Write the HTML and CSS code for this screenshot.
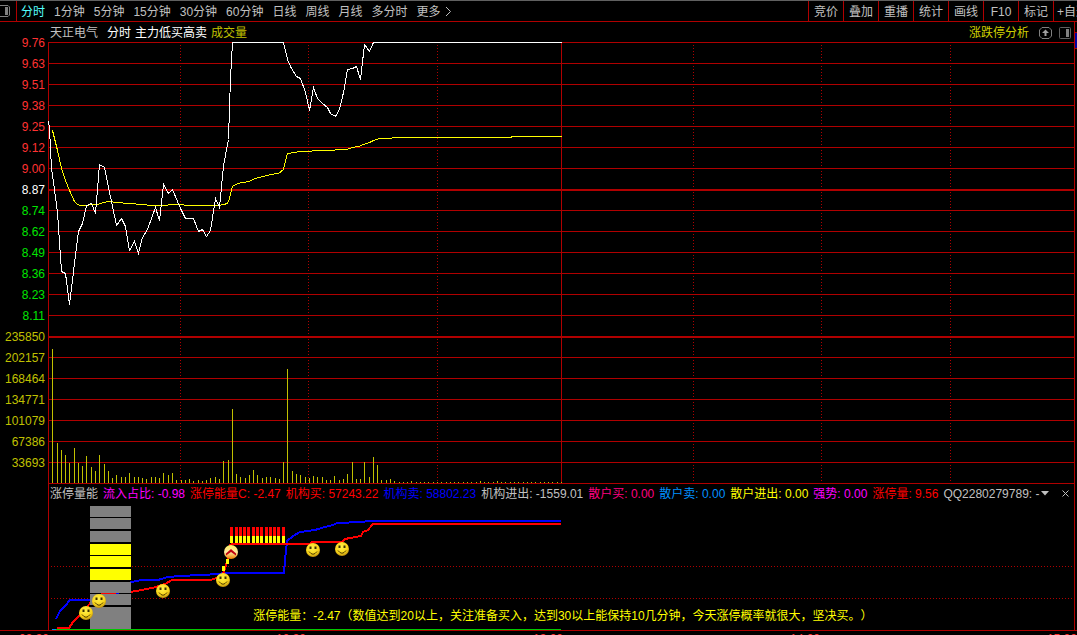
FILE: index.html
```html
<!DOCTYPE html>
<html lang="zh-CN">
<head>
  <meta charset="UTF-8">
  <title>天正电气 分时</title>
  <meta name="viewport" content="width=device-width, initial-scale=1.0">
  <link rel="stylesheet" href="styles.css">
</head>
<body>
  <!-- Toolbar -->
  <header class="toolbar">
    <button class="icon-btn panel-btn" type="button" aria-label="侧栏">
      <svg width="11" height="12" viewBox="0 0 11 12"><path d="M0 .5H8L9.500 2V10L8 11.500H0" fill="none" stroke="#808080"/><path d="M5 2H8V10H5Z" fill="#808080"/></svg>
    </button>
    <nav class="periods">
      <button class="active" type="button">分时</button>
      <button type="button">1分钟</button>
      <button type="button">5分钟</button>
      <button type="button">15分钟</button>
      <button type="button">30分钟</button>
      <button type="button">60分钟</button>
      <button type="button">日线</button>
      <button type="button">周线</button>
      <button type="button">月线</button>
      <button type="button">多分时</button>
      <button type="button">更多<svg class="chevron" width="8" height="10" viewBox="0 0 8 10"><path d="M2 0L6.500 4.500L2 9" fill="none" stroke="#c0c0c0"/></svg></button>
    </nav>
    <div class="tools">
      <button type="button">竞价</button>
      <button type="button">叠加</button>
      <button type="button">重播</button>
      <button type="button">统计</button>
      <button type="button">画线</button>
      <button type="button">F10</button>
      <button type="button">标记</button>
      <button class="clipped" type="button">+自选</button>
    </div>
  </header>

  <main class="workspace">
    <!-- Price and volume scale -->
    <ul class="axis">
      <li class="up">9.76</li>
      <li class="up">9.63</li>
      <li class="up">9.51</li>
      <li class="up">9.38</li>
      <li class="up">9.25</li>
      <li class="up">9.12</li>
      <li class="up">9.00</li>
      <li class="flat">8.87</li>
      <li class="down">8.74</li>
      <li class="down">8.62</li>
      <li class="down">8.49</li>
      <li class="down">8.36</li>
      <li class="down">8.23</li>
      <li class="down">8.11</li>
      <li class="vol">235850</li>
      <li class="vol">202157</li>
      <li class="vol">168464</li>
      <li class="vol">134771</li>
      <li class="vol">101079</li>
      <li class="vol">67386</li>
      <li class="vol">33693</li>
    </ul>

    <div class="charts">
      <div class="chart-head">
        <span class="name">天正电气</span>
        <span class="white">分时</span>
        <span class="white">主力低买高卖</span>
        <span class="gold">成交量</span>
        <a class="analysis" href="#">涨跌停分析</a>
        <button class="icon-btn move-btn" type="button" aria-label="上移">
          <svg width="13" height="12" viewBox="0 0 13 12"><path d="M3 .5H10L12.500 3V9L10 11.500H3L.500 9V3Z" fill="none" stroke="#808080"/><path d="M6.500 2.500L10 6H7.500V9H5.500V6H3Z" fill="#a0a0a0"/></svg>
        </button>
        <button class="icon-btn" type="button" aria-label="侧栏">
          <svg width="12" height="12" viewBox="0 0 12 12"><rect x=".5" y=".5" width="11" height="11" rx="1" fill="none" stroke="#606060"/><path d="M7 2H10V10H7Z" fill="#808080"/></svg>
        </button>
      </div>

      <svg class="price-chart" viewBox="0 0 1026 441" preserveAspectRatio="none">
        <g id="grid"></g>
        <g id="volume"></g>
        <g transform="translate(.5 .5)">
          <polyline class="line avg" points="4,88 9,108 13,126 17,138 21,148 26,159 29,162 32,163 49,162 55,160 60,159 79,161 95,162 102,163 115,163 125,162 145,163 169,163 176,162 180,160 184,144 189,141 200,139 207,136 222,132 230,131 235,127 237,118 239,111 252,109 298,107 304,105 310,104 315,102 321,100 325,98 331,96 357,95 382,95 462,95 464,94 513,94"/>
          <polyline class="line price" points="0,79 1,86 3,126 5,140 9,170 13,229 17,231 21,262 26,221 30,189 34,181 38,163 43,161 47,171 51,122 56,125 60,145 68,183 73,176 77,184 81,208 86,199 90,211 94,195 99,187 107,165 111,178 115,142 120,151 124,147 132,166 137,176 145,176 150,189 154,187 158,194 162,188 167,156 171,165 175,123 180,97 181,65 182,36 184,0 235,0 239,17 243,26 248,34 252,36 257,50 261,68 265,45 269,56 274,61 279,65 282,71 287,74 291,67 295,50 299,27 304,26 308,24 312,37 316,2 321,9 325,0 513,0"/>
        </g>
      </svg>

      <!-- Indicator -->
      <section class="indicator">
        <div class="indicator-head">
          <span class="name">涨停量能</span>
          <span class="magenta">流入占比: -0.98</span>
          <span class="red">涨停能量C: -2.47</span>
          <span class="red">机构买: 57243.22</span>
          <span class="blue">机构卖: 58802.23</span>
          <span class="name">机构进出: -1559.01</span>
          <span class="pink">散户买: 0.00</span>
          <span class="sky">散户卖: 0.00</span>
          <span class="yellow">散户进出: 0.00</span>
          <span class="magenta">强势: 0.00</span>
          <span class="red">涨停量: 9.56</span>
          <span class="name">QQ2280279789: -</span>
          <button class="icon-btn menu-btn" type="button" aria-label="菜单">
            <svg width="8" height="5" viewBox="0 0 8 5"><path d="M0 0H8L4 4.500Z" fill="#c0c0c0"/></svg>
          </button>
          <button class="icon-btn close-btn" type="button" aria-label="关闭">
            <svg width="7" height="7" viewBox="0 0 7 7"><path d="M.5 .5L6.500 6.500M6.500 .5L.5 6.500" stroke="#c0c0c0" fill="none"/></svg>
          </button>
        </div>

        <svg class="flow-chart" viewBox="0 0 1026 128" preserveAspectRatio="none">
          <defs>
            <radialGradient id="gold" cx="45%" cy="35%" r="65%">
              <stop offset="0" stop-color="#fff04a"/>
              <stop offset=".7" stop-color="#f8d418"/>
              <stop offset="1" stop-color="#b88a10"/>
            </radialGradient>
            <linearGradient id="orange" x1="0" y1="0" x2="0" y2="1">
              <stop offset="0" stop-color="#fff060"/>
              <stop offset=".5" stop-color="#ffe8a0"/>
              <stop offset="1" stop-color="#f08000"/>
            </linearGradient>
            <g id="smile">
              <circle r="7" fill="url(#gold)"/>
              <path d="M-3.500 -3.500H-1.500V-1H-3.500ZM1.500 -3.500H3.500V-1H1.500Z" fill="#3a3000"/>
              <path d="M-4 1.500Q0 7 4 1.500" fill="none" stroke="#4a3800"/>
            </g>
          </defs>
          <path class="dots" d="M3 64.500H1024M3 96.500H1024"/>
          <polyline class="flow sell" points="8,117 12,109 17,104 22,98 50,98 55,91 70,91 83,80 94,78 110,78 120,75 132,74 152,73 172,72 175,71 236,71 237,58 239,39 245,34 252,30 267,28 277,25 285,23 289,21 313,20 322,19 513,19"/>
          <polyline class="flow buy" points="9,126 21,126 25,120 32,113 38,106 44,99 55,91 82,90 94,88 108,85 117,82 124,78 162,78 169,76 175,72 178,63 181,53 182,43 184,42 262,42 264,40 294,40 297,37 302,36 313,34 315,30 320,28 324,23 325,22 513,22"/>
          <g id="blocks"></g>
          <g id="ticks"></g>
          <path d="M178 57H181V62H178ZM174 64H177V69H174Z" fill="#ff0"/>
          <path d="M4 127.500H513" stroke="#00c800"/>
          <path d="M4 127.500H8" stroke="#08f"/>
          <g id="faces"></g>
          <g class="face" transform="translate(183 50)">
            <circle r="7" fill="url(#orange)"/>
            <path d="M-5 1.500L0 -3L5 1.500V3.500L0 0L-5 3.500Z" fill="#c00010"/>
          </g>
        </svg>
        <p class="tip">涨停能量：-2.47（数值达到20以上，关注准备买入，达到30以上能保持10几分钟，今天涨停概率就很大，坚决买。）</p>
      </section>
    </div>

    <aside class="side"><div class="side-tab"></div></aside>
  </main>

  <footer class="times">
    <span>09:30</span>
    <span>10:30</span>
    <span>13:00</span>
    <span>14:00</span>
    <span>15:00</span>
  </footer>

  <script src="script.js"></script>
</body>
</html>
```

FILE: styles.css
```css
* {
  box-sizing: border-box;
}
body {
  background: #000;
  color: #c0c0c0;
  font-family: "Liberation Sans", "Noto Sans CJK SC", sans-serif;
  font-size: 12px;
  line-height: 16px;
  text-spacing-trim: space-all;
  margin: 0;
  height: 100vh;
  overflow: hidden;
}
button {
  background: none;
  border: none;
  color: inherit;
  font: inherit;
  padding: 0;
  white-space: nowrap;
  cursor: pointer;
}
svg {
  display: block;
}

/* Toolbar */
.toolbar {
  display: flex;
  height: 22px;
  border-top: 1px solid #606060;
  border-bottom: 1px solid #b00000;
}
.panel-btn {
  width: 17px;
  border-right: 1px solid #b00000;
}
.periods {
  display: flex;
  gap: 9px;
  padding: 2px 0 0 4px;
}
.periods button {
  display: flex;
  align-items: center;
}
.periods .active {
  color: #5ff;
}
.chevron {
  margin-left: 3px;
}
.tools {
  display: flex;
  margin-left: auto;
}
.tools button {
  width: 35px;
  padding-top: 2px;
  border-left: 1px solid #b00000;
}
.tools .clipped {
  width: 24px;
  padding-left: 3px;
  text-align: left;
  overflow: hidden;
}

/* Workspace */
.workspace {
  display: flex;
  border-bottom: 1px solid #b00000;
}
.axis {
  width: 48px;
  margin: 0;
  padding: 11px 3px 0 0;
  list-style: none;
  text-align: right;
}
.axis li {
  height: 21px;
  line-height: 21px;
}
.up { color: #ff3232; }
.flat { color: #fff; }
.down { color: #00e600; }
.vol { color: #c0c000; }

.charts {
  flex: 1;
  min-width: 0;
}
.chart-head {
  display: flex;
  align-items: center;
  height: 20px;
  padding: 1px 3px 0 2px;
}
.chart-head span {
  margin-right: 4px;
}
.chart-head .name {
  margin-right: 9px;
}
.chart-head .icon-btn {
  margin-left: 7px;
}
.chart-head .move-btn {
  margin-left: 10px;
}
.analysis {
  margin-left: auto;
  color: #d0d000;
  text-decoration: none;
}
.name { color: #c0c0c0; }
.white { color: #fff; }
.gold { color: #c0c000; }
.magenta { color: #f0f; }
.red { color: #f00; }
.blue { color: #00f; }
.pink { color: #ff0080; }
.sky { color: #0090ff; }
.yellow { color: #ff0; }

.price-chart,
.flow-chart {
  width: 100%;
  overflow: visible;
  shape-rendering: crispEdges;
}
.price-chart {
  height: 441px;
}
.grid-line {
  fill: #b00000;
}
.dots {
  stroke: #b00000;
  stroke-dasharray: 1 2;
}
.bar {
  fill: #c0c000;
}
.line {
  fill: none;
  stroke-width: 1;
}
.price { stroke: #fff; }
.avg { stroke: #ff0; }

/* Indicator */
.indicator {
  position: relative;
  box-shadow: inset 1px 0 #b00000;
}
.indicator-head {
  display: flex;
  align-items: center;
  gap: 5px;
  height: 19px;
  padding: 2px 0 0 2px;
  white-space: nowrap;
}
.menu-btn {
  margin-left: -3px;
}
.close-btn {
  margin: 0 5px 0 auto;
}
.flow-chart {
  height: 128px;
}
.flow {
  fill: none;
  stroke-width: 2;
}
.buy { stroke: #f00; }
.sell { stroke: #00f; }
.face {
  shape-rendering: auto;
}
.tip {
  position: absolute;
  left: 20%;
  bottom: 6px;
  margin: 0;
  color: #ff0;
  white-space: nowrap;
}

.side {
  width: 3px;
  padding-top: 10px;
  border-left: 1px solid #b00000;
}
.side-tab {
  height: 17px;
  background: #0000a0;
  border-top: 1px solid #b00000;
  border-bottom: 1px solid #b00000;
}

.times {
  display: flex;
  justify-content: space-between;
  padding: 2px 0 0 19px;
  line-height: 12px;
  color: #ff3232;
}
```

FILE: script.js
```js
const NS = 'http://www.w3.org/2000/svg';

function add(parent, tag, attrs) {
  const el = document.createElementNS(NS, tag);
  for (const key in attrs) el.setAttribute(key, attrs[key]);
  document.getElementById(parent).appendChild(el);
}

// Horizontal grid, the previous close and the volume top are double lines
for (let i = 0; i <= 21; i++) {
  const thick = i === 7 || i === 14;
  add('grid', 'rect', { class: 'grid-line', x: 0, y: i * 21, width: 1026, height: thick ? 2 : 1 });
}

// Half hour marks, solid for the open and the midday break
[0, 513].forEach(x => add('grid', 'rect', { class: 'grid-line', x: x, y: 0, width: 1, height: 442 }));
[132, 260, 389, 645, 773, 902].forEach(x => {
  add('grid', 'path', { class: 'dots', d: 'M' + (x + 0.5) + ' 3V441' });
});

// One volume bar per minute
const volume = [
  134, 40, 33, 28, 20, 35, 20, 17, 27, 16, 12, 28, 19, 12, 5, 8, 6, 6, 10, 6,
  6, 5, 4, 6, 6, 5, 10, 8, 10, 3, 3, 3, 4, 2, 3, 2, 3, 5, 6, 4,
  22, 23, 74, 9, 6, 5, 8, 13, 8, 5, 6, 6, 5, 4, 21, 114, 12, 9, 8, 6,
  5, 7, 6, 6, 3, 3, 7, 3, 4, 9, 21, 4, 4, 21, 6, 26, 18, 3, 3, 4,
  2, 1, 1, 1, 2
];
for (let i = 0; i < 120; i++) {
  const h = volume[i] || (i === 100 || i === 104 ? 2 : 1);
  add('volume', 'rect', { class: 'bar', x: Math.round((i + 1) * 4.275), y: 441 - h, width: 1, height: h });
}

// Energy blocks: [top, height, color]
[
  [4, 11, '#808080'], [16, 11, '#808080'], [29, 11, '#808080'],
  [42, 11, '#ffff00'], [54, 11, '#ffff00'], [67, 11, '#ffff00'],
  [80, 11, '#808080'], [92, 11, '#808080'], [105, 22, '#808080']
].forEach(b => add('blocks', 'rect', { x: 42, y: b[0], width: 41, height: b[1], fill: b[2] }));

[182, 187, 191, 195, 199, 204, 208, 212, 217, 221, 225, 229, 234].forEach(x => {
  add('ticks', 'rect', { x: x, y: 25, width: 3, height: 9, fill: '#ff0000' });
  add('ticks', 'rect', { x: x, y: 34, width: 3, height: 7, fill: '#ffff00' });
});

[[38, 111], [51, 99], [115, 89], [175, 78], [265, 48], [294, 47]].forEach(p => {
  add('faces', 'use', { class: 'face', href: '#smile', transform: 'translate(' + p[0] + ' ' + p[1] + ')' });
});
```
